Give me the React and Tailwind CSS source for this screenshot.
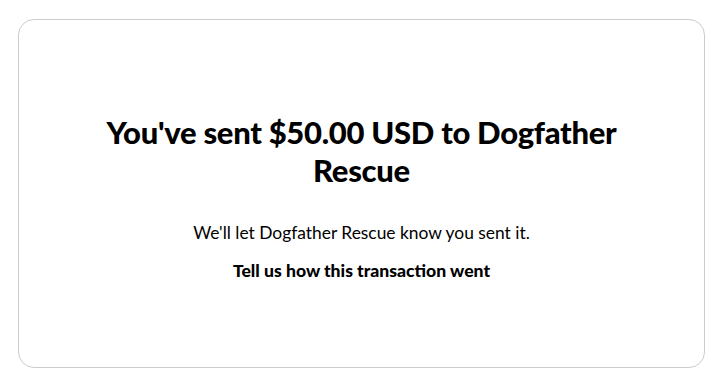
import React from 'react';

function App() {
  return (
    <div className="min-h-screen bg-white pt-[19px] px-[18px]" style={{ fontFamily: 'Lato, "Liberation Sans", sans-serif' }}>
      <div className="w-[687px] h-[349px] rounded-2xl border border-[#cccccc] flex flex-col items-center justify-center text-center text-black pt-[8px]">
        <h1 className="max-w-[560px] text-[31px] leading-[38px] font-black tracking-[-0.3px]">
          You've sent $50.00 USD to Dogfather Rescue
        </h1>
        <p className="mt-[32px] text-[17.4px] leading-[24px]">We'll let Dogfather Rescue know you sent it.</p>
        <p className="mt-[15px] text-[17.6px] leading-[22px] font-black">Tell us how this transaction went</p>
      </div>
    </div>
  );
}

export default App;
